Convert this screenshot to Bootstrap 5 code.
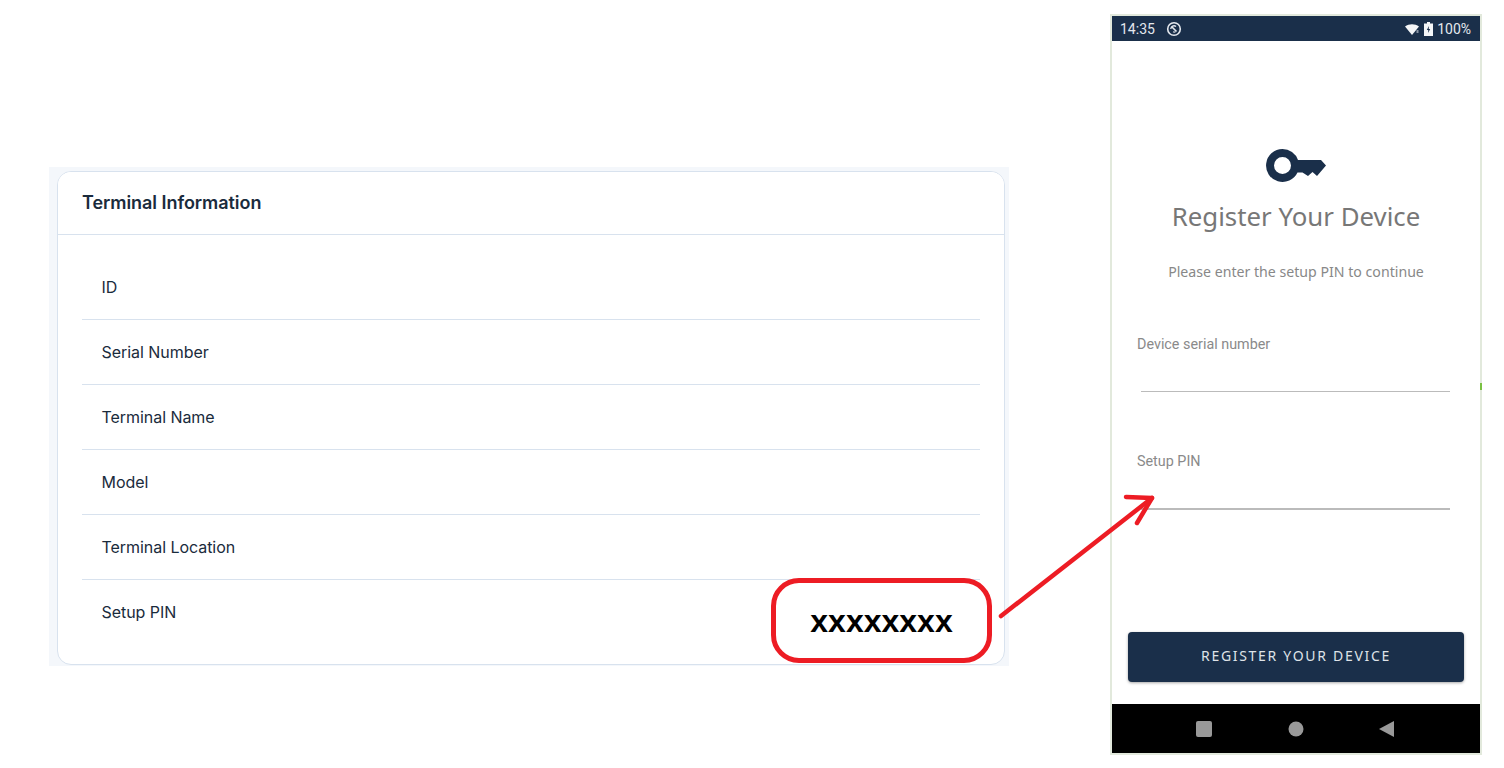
<!DOCTYPE html>
<html lang="en">
<head>
    <meta charset="UTF-8">
    <meta name="viewport" content="width=device-width, initial-scale=1.0">
    <title>Terminal setup PIN</title>
    <link href="https://cdn.jsdelivr.net/npm/bootstrap@5.3.2/dist/css/bootstrap.min.css" rel="stylesheet">
    <style>
        body { background: #fff; height: 768px; overflow: hidden; position: relative; }
        /* left: terminal card */
        .term-panel { width: 960px; height: 499px; margin: 167px 0 0 49px; padding: 4px 4px 1px 8px; background: #f4f7fb; }
        .term-card { height: 494px; border: 1px solid #d8e2ee; border-radius: 14px; background: #fff; font-family: Inter, sans-serif; color: #1a2b3c; }
        .term-card .card-header { height: 63px; padding: 0 24px; background: #fff; border-bottom: 1px solid #d8e2ee; font-size: 18px; font-weight: 600; line-height: 61px; letter-spacing: -.05px; border-radius: 13px 13px 0 0; }
        .term-card .card-body { padding: 20px 24px 19px; }
        .term-card .list-group-item { height: 65px; padding: 0 20px 0 19.5px; border-color: #d8e2ee; font-size: 16px; line-height: 64px; letter-spacing: -.05px; color: #1a2b3c; background: transparent; }
        /* callout over the card */
        .pin-box { position: absolute; left: 771px; top: 578px; width: 221px; height: 85px; border: 5px solid #ed1c24; border-radius: 28px; background: #fff; font-family: "Liberation Sans", Arial, sans-serif; font-size: 32px; font-weight: 700; color: #000; line-height: 1; }
        .pin-arrow { position: absolute; left: 995px; top: 490px; }
        /* right: phone */
        .phone { width: 372px; height: 741px; margin: 14px 0 0 101px; border: 2px solid #e2e9dc; background: #fff; position: relative; }
        .phone-status { height: 25px; padding: 1px 9px 0 8px; background: #1a2f4a; color: #e4e8ee; font-family: Roboto, sans-serif; font-size: 14px; }
        .sync-icon { margin-left: 11px; }
        .phone-body { height: 663px; padding-top: 108px; }
        .key-icon { display: block; margin: 0 0 0 154px; }
        .phone-title { margin: 17px 0 0; font-family: "Noto Sans", sans-serif; font-size: 25.8px; font-weight: 400; line-height: 32px; color: #777; }
        .phone-sub { margin: 30px 0 0; font-family: "Noto Sans", sans-serif; font-size: 14.15px; line-height: 20px; color: #888; }
        .phone-form { margin-top: 54px; }
        .phone-form .form-label { display: block; margin: 0 0 0 25px; font-family: Roboto, sans-serif; font-size: 14.35px; line-height: 18px; color: #8a8a8a; }
        .line-input { display: block; width: 309px; height: 38px; margin-left: 29px; padding: 0; border: 0; border-bottom: 1px solid #bbb; border-radius: 0; background: transparent; box-shadow: none; }
        .line-input.is-current { height: 39px; border-bottom: 2px solid #bbb; }
        .field-gap { margin-top: 61px; }
        .btn-register { display: block; width: 336px; height: 50px; margin: 122px 0 0 16px; padding: 0 0 4px; border: 0; border-radius: 4px; background: #1a2f4a; color: #dfe3e8; font-family: "Noto Sans", sans-serif; font-size: 14px; letter-spacing: 1.7px; box-shadow: 0 1px 3px rgba(0, 0, 0, .35); }
        .btn-register:hover { background: #1a2f4a; color: #dfe3e8; }
        .phone-nav { height: 49px; background: #000; }
        .signal-tick { position: absolute; right: -2px; top: 367px; width: 2px; height: 7px; background: #7ac143; }
    </style>
</head>
<body>
    <div class="d-flex align-items-start">
        <!-- Terminal card -->
        <div class="term-panel">
            <div class="card term-card">
                <div class="card-header flex-shrink-0">Terminal Information</div>
                <div class="card-body">
                    <ul class="list-group list-group-flush">
                        <li class="list-group-item">ID</li>
                        <li class="list-group-item">Serial Number</li>
                        <li class="list-group-item">Terminal Name</li>
                        <li class="list-group-item">Model</li>
                        <li class="list-group-item">Terminal Location</li>
                        <li class="list-group-item">Setup PIN</li>
                    </ul>
                </div>
            </div>
        </div>

        <!-- Phone -->
        <div class="phone">
            <div class="phone-status d-flex align-items-center">
                <span>14:35</span>
                <svg class="sync-icon" width="16" height="16" viewBox="0 0 16 16" fill="none" stroke="#e4e8ee">
                    <circle cx="8" cy="8" r="6.300" stroke-width="1.600"/>
                    <path d="M4.800 8A3.200 3.200 0 0 1 10 5.500" stroke-width="1.300"/>
                    <path d="M5.500 5.500L10.500 10.500" stroke-width="1.600"/>
                    <path d="M7 10.800A3.200 3.200 0 0 0 9.500 10.800" stroke-width="1.200"/>
                </svg>
                <svg class="ms-auto" width="15" height="11" viewBox="0 0 15 11">
                    <path d="M0 2.500C4 -.6 10 -.6 14 2.500L7 11z" fill="#f4f6f8"/>
                    <path d="M11.500 6h2v3h-2z" fill="#8b97a6"/>
                </svg>
                <svg class="ms-1" width="9" height="14" viewBox="0 0 9 14">
                    <path d="M3 0h3v1.500h3V14H0V1.500h3z" fill="#f4f6f8"/>
                    <path d="M5 4L2.800 8H4.300L4 11 6.200 7H4.700z" fill="#1a2f4a"/>
                </svg>
                <span class="ms-1">100%</span>
            </div>
            <div class="phone-body text-center">
                <svg class="key-icon" width="60" height="34" viewBox="0 0 60 34">
                    <path fill="#1a2f4a" fill-rule="evenodd" d="M16.500 0A16.500 16.500 0 0 1 32 11H55L60 16.500 51 27 46.500 23 42 27 36.500 23.500H31.500A16.500 16.500 0 1 1 16.500 0ZM16.500 8A8.500 8.500 0 1 0 16.500 25 8.500 8.500 0 1 0 16.500 8Z"/>
                </svg>
                <h1 class="phone-title">Register Your Device</h1>
                <p class="phone-sub">Please enter the setup PIN to continue</p>
                <form class="phone-form text-start">
                    <label class="form-label" for="serial">Device serial number</label>
                    <input class="form-control line-input" type="text" id="serial">
                    <div class="field-gap">
                        <label class="form-label" for="pin">Setup PIN</label>
                        <input class="form-control line-input is-current" type="text" id="pin">
                    </div>
                    <button type="button" class="btn btn-register">REGISTER YOUR DEVICE</button>
                </form>
            </div>
            <div class="phone-nav d-flex align-items-center justify-content-center">
                <svg width="200" height="18" viewBox="0 0 200 18" fill="#999">
                    <rect x="0" y="1" width="16" height="16" rx="2"/>
                    <circle cx="100" cy="9" r="7.500"/>
                    <path d="M198 1V17L183 9z"/>
                </svg>
            </div>
            <span class="signal-tick"></span>
        </div>
    </div>

    <!-- Callout -->
    <div class="pin-box d-flex align-items-center justify-content-center">xxxxxxxx</div>
    <svg class="pin-arrow" width="165" height="132" viewBox="0 0 165 132" fill="none" stroke="#ed1c24" stroke-width="4.500" stroke-linecap="round" stroke-linejoin="round">
        <path d="M6 126L157 8"/>
        <path d="M131 7L157 8 142 33"/>
    </svg>
</body>
</html>
